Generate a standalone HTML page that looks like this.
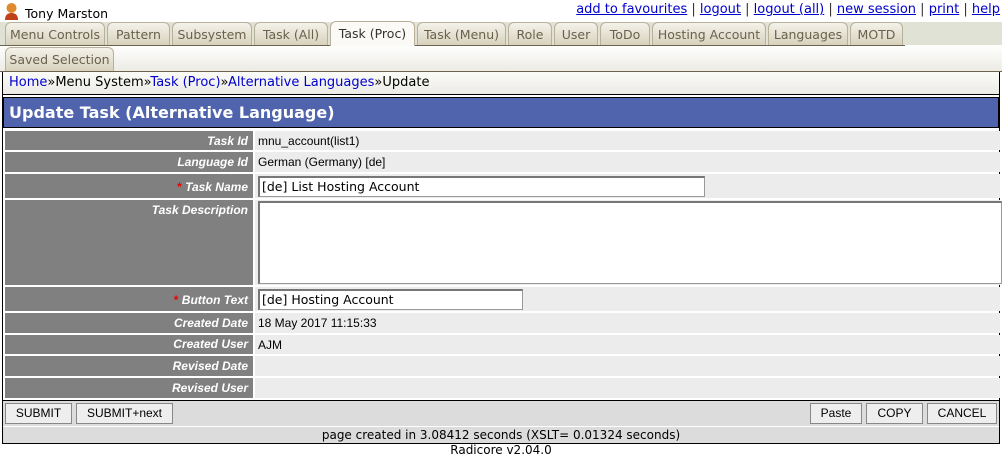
<!DOCTYPE html>
<html><head><style>
*{margin:0;padding:0;box-sizing:border-box}
body{width:1002px;height:458px;background:#fff;position:relative;font-family:"DejaVu Sans",sans-serif;font-size:12px;overflow:hidden}
.a{position:absolute}
.tl{position:absolute;top:2px;right:2px;font-size:13px;color:#333}
.tl a{color:#00c;text-decoration:underline}
.tab{position:absolute;height:23px;border:1px solid #b8b098;border-bottom:none;border-radius:6px 6px 0 0;background:linear-gradient(#f4f2ea,#d8d2bc);color:#6a6050;font-size:12.5px;text-align:center;line-height:24px}
.tab.on{background:#fbfaf6;color:#333;height:25px}
.row{position:absolute;left:5px;right:2px}
.lab{position:absolute;left:0;width:248px;top:0;bottom:0;background:#808080;color:#fff;font:italic bold 12px "Liberation Sans",sans-serif;text-align:right;padding-right:5px}
.val{position:absolute;left:250px;right:0;top:0;bottom:0;background:#ececec;font:12px "Liberation Sans",sans-serif;padding-left:3px}
.star{color:#e00;font-style:normal}
.inp{position:absolute;background:#fff;border:1px solid #999;border-top:2px solid #777;border-left:2px solid #777;font:12.5px "DejaVu Sans",sans-serif;padding-left:2px;line-height:18px}
.btn{position:absolute;top:403px;height:21px;border:1px solid #888;background:#eee;font:12px "Liberation Sans",sans-serif;text-align:center;line-height:19px}
</style></head><body>
<div class="a" style="left:4px;top:2px;width:15px;height:18px">
<svg width="15" height="18"><circle cx="7.5" cy="6" r="5" fill="#e08a30"/><path d="M1 18 Q1 11 7.5 11 Q14 11 14 18Z" fill="#c0401a"/></svg></div>
<div class="a" style="left:25px;top:6px;font-size:12.5px">Tony Marston</div>
<div class="tl"><a>add to favourites</a> | <a>logout</a> | <a>logout (all)</a> | <a>new session</a> | <a>print</a> | <a>help</a></div>
<div class="a" style="left:0;top:22px;width:1002px;height:23px;background:#e0e2d6"></div>
<div class="a" style="left:0;top:45px;width:1002px;height:26px;background:linear-gradient(#fff,#ecebe4)"></div>
<div class="a" style="left:0;top:45px;width:905px;height:1px;background:#6b6350"></div>
<div class="a" style="left:0;top:71px;width:1002px;height:1px;background:#6b6350"></div>
<div class="tab" style="left:5px;top:22px;width:100px">Menu Controls</div>
<div class="tab" style="left:107px;top:22px;width:63px">Pattern</div>
<div class="tab" style="left:172px;top:22px;width:80px">Subsystem</div>
<div class="tab" style="left:254px;top:22px;width:74px">Task (All)</div>
<div class="tab on" style="left:330px;top:21px;width:85px">Task (Proc)</div>
<div class="tab" style="left:417px;top:22px;width:89px">Task (Menu)</div>
<div class="tab" style="left:508px;top:22px;width:44px">Role</div>
<div class="tab" style="left:554px;top:22px;width:44px">User</div>
<div class="tab" style="left:600px;top:22px;width:50px">ToDo</div>
<div class="tab" style="left:652px;top:22px;width:114px">Hosting Account</div>
<div class="tab" style="left:768px;top:22px;width:80px">Languages</div>
<div class="tab" style="left:850px;top:22px;width:53px">MOTD</div>
<div class="tab" style="left:5px;top:47px;width:109px;height:24px">Saved Selection</div>
<div class="a" style="left:2px;top:72px;width:998px;height:372px;border:1px solid #000;border-top:none"></div>
<div class="a" style="left:3px;top:72px;width:996px;height:23px;background:linear-gradient(#fbfbf8,#ecebe6);font-size:13px;padding:3px 0 0 6px;border-bottom:1px solid #000"><span style="color:#00c">Home</span>»Menu System»<span style="color:#00c">Task (Proc)</span>»<span style="color:#00c">Alternative Languages</span>»Update</div>
<div class="a" style="left:3px;top:97px;width:996px;height:31px;background:#4f64ad;border:1px solid #000;color:#fff;font:bold 16px 'DejaVu Sans',sans-serif;padding:5px 0 0 5px">Update Task (Alternative Language)</div>
<div class="row" style="top:131px;height:19px"><div class="lab" style="padding-top:3px">Task Id</div><div class="val" style="padding-top:3px">mnu_account(list1)</div></div>
<div class="row" style="top:152px;height:20px"><div class="lab" style="padding-top:3px">Language Id</div><div class="val" style="padding-top:3px">German (Germany) [de]</div></div>
<div class="row" style="top:174px;height:24px"><div class="lab" style="padding-top:6px"><span class="star">*</span> Task Name</div><div class="val"><div class="inp" style="left:3px;top:2px;width:447px;height:21px">[de] List Hosting Account</div></div></div>
<div class="row" style="top:200px;height:85px"><div class="lab" style="padding-top:3px">Task Description</div><div class="val"><div class="inp" style="left:3px;top:1px;width:744px;height:83px"></div></div></div>
<div class="row" style="top:287px;height:24px"><div class="lab" style="padding-top:6px"><span class="star">*</span> Button Text</div><div class="val"><div class="inp" style="left:3px;top:2px;width:265px;height:21px">[de] Hosting Account</div></div></div>
<div class="row" style="top:313px;height:20px"><div class="lab" style="padding-top:3px">Created Date</div><div class="val" style="padding-top:3px">18 May 2017 11:15:33</div></div>
<div class="row" style="top:335px;height:19px"><div class="lab" style="padding-top:2px">Created User</div><div class="val" style="padding-top:3px">AJM</div></div>
<div class="row" style="top:356px;height:20px"><div class="lab" style="padding-top:3px">Revised Date</div><div class="val"></div></div>
<div class="row" style="top:378px;height:20px"><div class="lab" style="padding-top:3px">Revised User</div><div class="val"></div></div>
<div class="a" style="left:3px;top:400px;width:996px;height:1px;background:#000"></div>
<div class="a" style="left:3px;top:401px;width:996px;height:25px;background:#dcdcdc"></div>
<div class="btn" style="left:5px;width:67px">SUBMIT</div>
<div class="btn" style="left:76px;width:97px">SUBMIT+next</div>
<div class="btn" style="left:810px;width:52px">Paste</div>
<div class="btn" style="left:866px;width:57px">COPY</div>
<div class="btn" style="left:927px;width:70px">CANCEL</div>
<div class="a" style="left:3px;top:427px;width:996px;height:16px;background:#dcdcdc;text-align:center;font-size:12px;line-height:16px">page created in 3.08412 seconds (XSLT= 0.01324 seconds)</div>
<div class="a" style="left:0;top:443px;width:1002px;text-align:center;font-size:12px">Radicore v2.04.0</div>
</body></html>
